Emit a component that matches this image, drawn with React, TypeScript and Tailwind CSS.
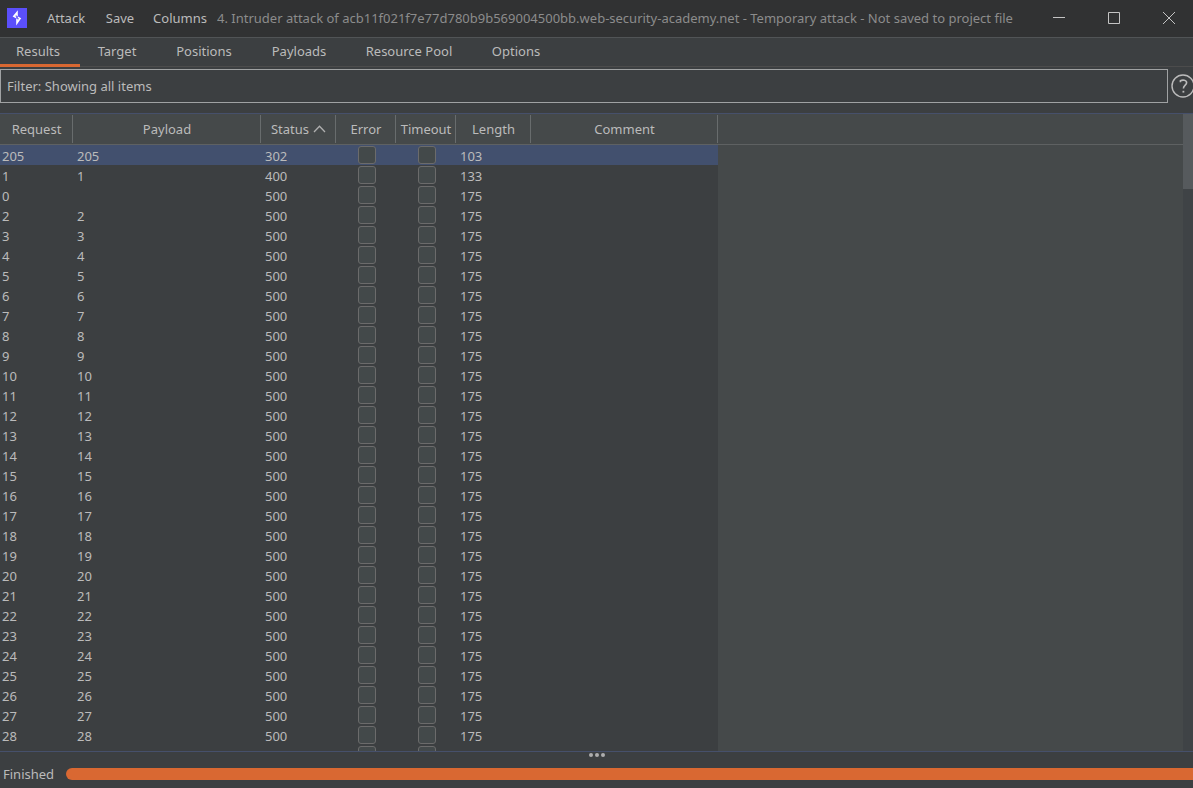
import React from "react";

const menus = [
  { label: "Attack", width: "w-[60px]" },
  { label: "Save", width: "w-[48px]" },
  { label: "Columns", width: "w-[72px]" },
];

const tabs = [
  { label: "Results", width: "w-20" },
  { label: "Target", width: "w-[74px]" },
  { label: "Positions", width: "w-[100px]" },
  { label: "Payloads", width: "w-[90px]" },
  { label: "Resource Pool", width: "w-[130px]" },
  { label: "Options", width: "w-[84px]" },
];

const columns = [
  { label: "Request", width: "w-[73px]" },
  { label: "Payload", width: "w-[188px]" },
  { label: "Status", width: "w-[75px]" },
  { label: "Error", width: "w-[60px]" },
  { label: "Timeout", width: "w-[60px]" },
  { label: "Length", width: "w-[75px]" },
  { label: "Comment", width: "w-[187px]" },
];

type Row = { request: string; payload: string; status: string; length: string };

const rows: Row[] = [
  { request: "205", payload: "205", status: "302", length: "103" },
  { request: "1", payload: "1", status: "400", length: "133" },
  { request: "0", payload: "", status: "500", length: "175" },
  ...Array.from({ length: 27 }, (_, i) => ({
    request: String(i + 2),
    payload: String(i + 2),
    status: "500",
    length: "175",
  })),
  { request: "", payload: "", status: "", length: "" },
];

function TitleBar() {
  return (
    <header className="flex h-[38px] shrink-0 items-center border-b border-[#515456] bg-[#313233] pb-px">
      <svg className="ml-[7px] mr-[9px] size-5 shrink-0" viewBox="0 0 20 20" aria-hidden="true">
        <rect width="20" height="20" fill="#5b4ffb" />
        <path d="M10.8 2.2 L5.6 8.6 L10.8 11.2 Z M9.2 7.6 L14.2 10.2 L9.2 17.4 Z" fill="#fff" />
        <path d="M8.4 8.3 L9.2 6.8 V8.7 Z M11.8 10.3 L10.8 12.4 V10 Z" fill="#5b4ffb" />
      </svg>
      <nav className="flex shrink-0">
        {menus.map((m) => (
          <button key={m.label} type="button" className={`${m.width} text-center text-[#bbbbbb]`}>
            {m.label}
          </button>
        ))}
      </nav>
      <h1 className="ml-px min-w-0 flex-1 truncate text-[#8c8c8c]">
        4. Intruder attack of acb11f021f7e77d780b9b569004500bb.web-security-academy.net - Temporary attack - Not saved
        to project file
      </h1>
      <div className="flex shrink-0 text-[#c4c4c4]">
        <button type="button" aria-label="Minimize" className="flex w-[54px] justify-center">
          <svg width="12" height="12" viewBox="0 0 12 12" stroke="currentColor">
            <path d="M0 5.5H12" />
          </svg>
        </button>
        <button type="button" aria-label="Maximize" className="flex w-14 justify-center">
          <svg width="12" height="12" viewBox="0 0 12 12" fill="none" stroke="currentColor">
            <path d="M.5 .5H11.5V11.5H.5Z" />
          </svg>
        </button>
        <button type="button" aria-label="Close" className="mr-[-3px] flex w-[54px] justify-center">
          <svg width="12" height="12" viewBox="0 0 12 12" fill="none" stroke="currentColor">
            <path d="M0 0L12 12M12 0L0 12" />
          </svg>
        </button>
      </div>
    </header>
  );
}

function Tick({ label }: { label: string }) {
  return (
    <input
      type="checkbox"
      aria-label={label}
      className="ml-[22px] block size-[18px] appearance-none rounded-[3px] border border-[#6b6b6b] bg-[#43494a]"
    />
  );
}

function Results() {
  return (
    <section className="flex min-h-0 flex-1 border-y border-[#46506b]">
      <div className="min-w-0 flex-1 overflow-hidden bg-[#45494a]">
        <div className="bg-[linear-gradient(#5e6162,#5e6162)] bg-[length:100%_1px] bg-[position:0_30px] bg-no-repeat">
          <table className="w-[718px] table-fixed border-separate border-spacing-0">
            <thead>
              <tr>
                {columns.map((c) => (
                  <th
                    key={c.label}
                    scope="col"
                    className={`${c.width} h-[31px] border-b border-[#5e6162] p-0 pb-px font-normal`}
                  >
                    <div className="flex h-7 items-center justify-center gap-1 border-r border-[#686c6d] pl-px">
                      {c.label}
                      {c.label === "Status" && (
                        <svg width="13" height="8" viewBox="0 0 13 8" fill="none" stroke="#b0b0b0" strokeWidth="1.3">
                          <path d="M1 7L6.5 1.2L12 7" />
                        </svg>
                      )}
                    </div>
                  </th>
                ))}
              </tr>
            </thead>
            <tbody>
              {rows.map((r, i) => (
                <tr key={i} className={i === 0 ? "bg-[#42506e]" : "bg-[#3c3f41]"}>
                  <td className="h-5 p-0 pl-0.5 pt-0.5 leading-[18px]">{r.request}</td>
                  <td className="h-5 p-0 pl-1 pt-0.5 leading-[18px]">{r.payload}</td>
                  <td className="h-5 p-0 pl-1 pt-0.5 leading-[18px]">{r.status}</td>
                  <td className="h-5 p-0 pb-px pt-px">
                    <Tick label={`Error ${r.request}`} />
                  </td>
                  <td className="h-5 p-0 pb-px pt-px">
                    <Tick label={`Timeout ${r.request}`} />
                  </td>
                  <td className="h-5 p-0 pl-1 pt-0.5 leading-[18px]">{r.length}</td>
                  <td className="h-5 p-0" />
                </tr>
              ))}
            </tbody>
          </table>
        </div>
      </div>
      <div className="w-2.5 shrink-0 bg-[#3f4346]">
        <div className="h-[75px] bg-[#565a5d]" />
      </div>
    </section>
  );
}

export default function App() {
  return (
    <div className="flex h-screen flex-col overflow-hidden bg-[#3c3f41] font-['Noto_Sans',sans-serif] text-[13px] leading-[18px] text-[#bbbbbb]">
      <TitleBar />
      <nav className="flex h-[29px] shrink-0 border-b border-[#4c4c4c]" role="tablist">
        {tabs.map((t, i) => (
          <button
            key={t.label}
            type="button"
            role="tab"
            aria-selected={i === 0}
            className={`${t.width} h-[29px] border-b-[3px] text-center ${
              i === 0 ? "border-[#d96832] pr-1" : "border-transparent"
            }`}
          >
            {t.label}
          </button>
        ))}
      </nav>
      <div className="mb-2.5 mt-0.5 flex shrink-0 items-center gap-[3px]">
        <button type="button" className="h-[34px] min-w-0 flex-1 border border-[#a0a2a3] pl-1.5 text-left">
          Filter: Showing all items
        </button>
        <button type="button" aria-label="Help" className="w-[22px] shrink-0">
          <svg width="24" height="24" viewBox="0 0 24 24" fill="none" stroke="#bbbbbb" strokeWidth="1.4">
            <circle cx="12" cy="12" r="11" />
            <path d="M9.4 8.2V6.8C11.4 5.7 15.6 5.7 15.6 8.8C15.6 11.2 12.4 11.3 12.4 14.6" strokeWidth="1.6" />
            <path d="M12.4 16.8V18.6" strokeWidth="1.8" />
          </svg>
        </button>
      </div>
      <Results />
      <div className="flex h-2 shrink-0 items-start justify-center gap-0.5 pt-px">
        <span className="size-1 rounded-full bg-[#adadad]" />
        <span className="size-1 rounded-full bg-[#adadad]" />
        <span className="size-1 rounded-full bg-[#adadad]" />
      </div>
      <footer className="flex h-7 shrink-0 items-center pl-[3px]">
        <span className="w-[63px] shrink-0">Finished</span>
        <div
          role="progressbar"
          aria-label="Attack progress"
          aria-valuenow={100}
          className="h-3 flex-1 rounded-l-full bg-[#d96832]"
        />
      </footer>
    </div>
  );
}
